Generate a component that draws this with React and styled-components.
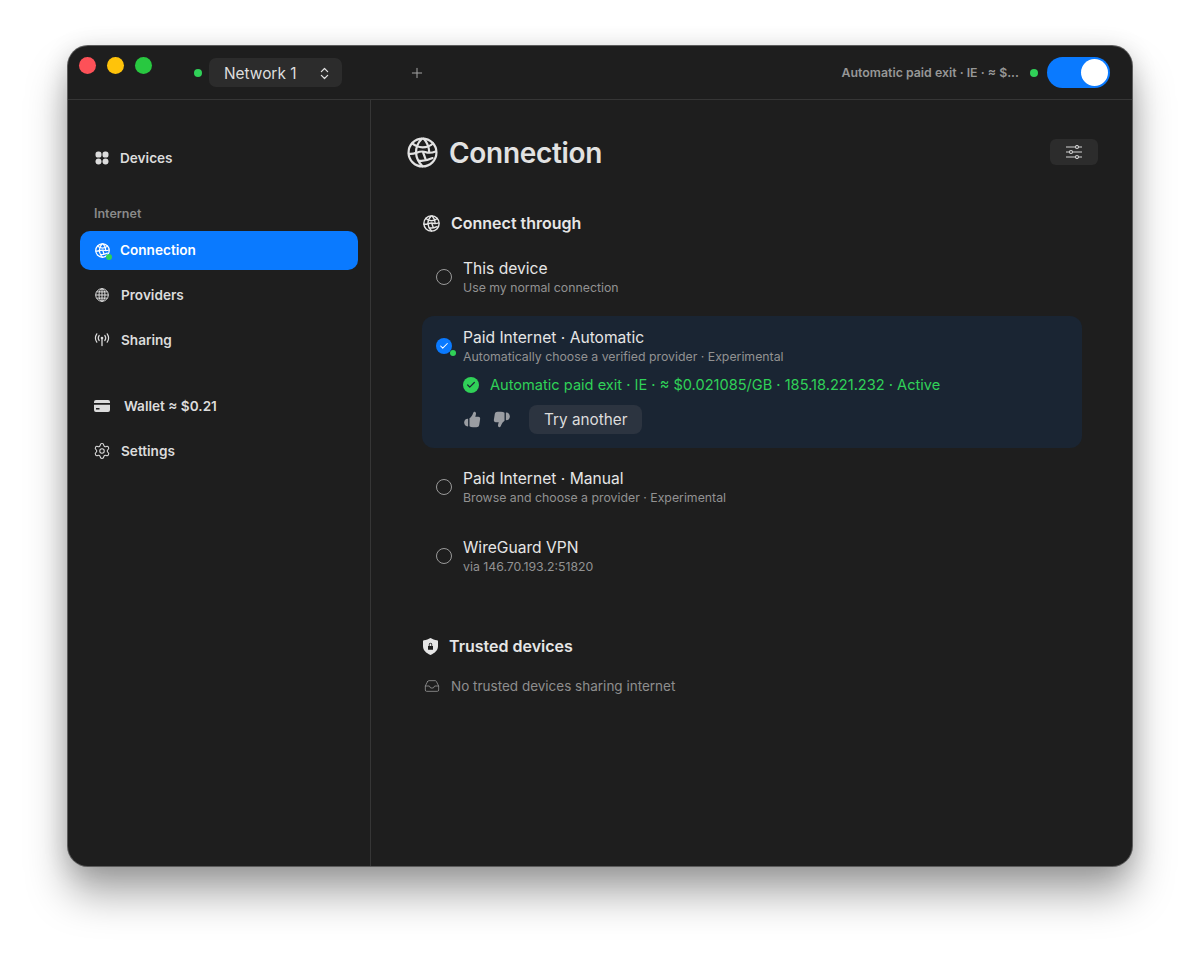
import React from "react";
import styled, { createGlobalStyle } from "styled-components";
import { ChevronsUpDown, Plus, Settings, Check, Inbox } from "lucide-react";

const GlobalStyle = createGlobalStyle`
    html, body {
        margin: 0;
        padding: 0;
        background: #fff;
        font-family: Inter, "Liberation Sans", sans-serif;
        -webkit-font-smoothing: antialiased;
    }
`;

const Page = styled.div`
    width: 1200px;
    height: 956px;
    box-sizing: border-box;
    padding: 46px 68px 90px;
    overflow: hidden;
`;

const Window = styled.div`
    height: 820px;
    display: flex;
    flex-direction: column;
    background: #1e1e1e;
    border-radius: 20px;
    box-shadow: 0 0 0 1px #5c5c5c, 0 28px 42px rgba(0, 0, 0, 0.34), 0 4px 26px rgba(0, 0, 0, 0.16);
    overflow: hidden;
`;

const TitleBar = styled.header`
    height: 53px;
    flex: none;
    display: flex;
    align-items: center;
    padding: 0 22px 0 11px;
    border-bottom: 1px solid #363636;
`;

const Lights = styled.div`
    display: flex;
    gap: 11px;
    margin: -15px 42px 0 0;
`;

const Light = styled.span`
    width: 17px;
    height: 17px;
    border-radius: 50%;
    background: ${(p) => p.$color};
`;

const Dot = styled.span`
    width: 8px;
    height: 8px;
    border-radius: 50%;
    background: #30d158;
    flex: none;
`;

const NetworkSelect = styled.div`
    width: 133px;
    height: 29px;
    box-sizing: border-box;
    margin-left: 7px;
    padding: 1px 10px 0 15px;
    display: flex;
    align-items: center;
    justify-content: space-between;
    background: #2c2c2c;
    border-radius: 7px;
    color: #dedede;
    font-size: 15.4px;
`;

const AddButton = styled.div`
    display: flex;
    margin-left: 67px;
    color: #a4a4a4;
`;

const StatusText = styled.span`
    margin-left: auto;
    color: #979797;
    font-size: 12.35px;
    font-weight: 600;
`;

const StatusDot = styled(Dot)`
    margin: 0 9px 0 11px;
`;

const Toggle = styled.div`
    width: 63px;
    height: 31px;
    box-sizing: border-box;
    padding: 2px;
    display: flex;
    justify-content: flex-end;
    background: #0a7aff;
    border-radius: 16px;
`;

const Knob = styled.span`
    width: 27px;
    height: 27px;
    border-radius: 50%;
    background: #fff;
`;

const Body = styled.div`
    flex: 1;
    display: flex;
    min-height: 0;
`;

const Sidebar = styled.nav`
    width: 303px;
    flex: none;
    box-sizing: border-box;
    padding: 39px 12px 0;
    border-right: 1px solid #363636;
`;

const NavItem = styled.div`
    position: relative;
    height: 39px;
    box-sizing: border-box;
    display: flex;
    align-items: center;
    gap: ${(p) => p.$gap || 11}px;
    padding: 0 0 1px 15px;
    margin-top: ${(p) => p.$top || 0}px;
    border-radius: 10px;
    background: ${(p) => (p.$active ? "#0a7aff" : "transparent")};
    color: ${(p) => (p.$active ? "#fff" : "#dcdcdc")};
    font-size: 13.6px;
    font-weight: 600;
`;

const NavIcon = styled.span`
    position: relative;
    width: 14px;
    height: 16px;
    display: flex;
    align-items: center;
    justify-content: center;

    svg {
        flex: none;
    }
`;

const NavBadge = styled(Dot)`
    position: absolute;
    right: -3px;
    bottom: -2px;
    width: 6px;
    height: 6px;
`;

const NavLabel = styled.div`
    margin: 28px 0 9px 14px;
    color: #8a8a8a;
    font-size: 12.5px;
    font-weight: 600;
    line-height: 16px;
`;

const Main = styled.main`
    flex: 1;
    box-sizing: border-box;
    padding: 37px 34px 0 36px;
    min-width: 0;
`;

const TitleRow = styled.div`
    display: flex;
    align-items: center;
    height: 31px;
    color: #e2e2e2;
`;

const Title = styled.h1`
    margin: 0 0 0 11px;
    font-size: 28px;
    font-weight: 600;
    letter-spacing: -0.3px;
`;

const FilterButton = styled.div`
    margin: -2px 0 0 auto;
    width: 48px;
    height: 26px;
    display: flex;
    align-items: center;
    justify-content: center;
    background: #2c2c2c;
    border-radius: 6px;
    color: #d4d4d4;
`;

const Section = styled.section`
    margin: ${(p) => p.$top}px 16px 0 15px;
`;

const SectionHead = styled.div`
    display: flex;
    align-items: center;
    gap: 11px;
    margin-left: 1px;
    color: #e6e6e6;
    font-size: 16px;
    font-weight: 600;
    line-height: 20px;
`;

const Options = styled.div`
    margin-top: 26px;
    display: flex;
    flex-direction: column;
`;

const Option = styled.div`
    padding: ${(p) => (p.$selected ? "12px 14px 14px" : "0 14px")};
    margin-bottom: ${(p) => p.$after || 0}px;
    background: ${(p) => (p.$selected ? "#1a2533" : "transparent")};
    border-radius: 12px;
`;

const OptionMain = styled.div`
    display: flex;
    align-items: center;
    gap: 11px;
`;

const RadioMark = styled.span`
    position: relative;
    width: 16px;
    height: 16px;
    flex: none;
    box-sizing: border-box;
    margin-top: -2px;
    display: flex;
    align-items: center;
    justify-content: center;
    border-radius: 50%;
    border: ${(p) => (p.$on ? "none" : "1.2px solid #9a9a9a")};
    background: ${(p) => (p.$on ? "#0a7aff" : "transparent")};
    color: #fff;
`;

const RadioBadge = styled(Dot)`
    position: absolute;
    right: -4px;
    bottom: -2px;
    width: 6px;
    height: 6px;
`;

const OptionTitle = styled.div`
    color: #e6e6e6;
    font-size: 15.6px;
    line-height: 20px;
`;

const OptionSub = styled.div`
    color: #929292;
    font-size: 12.3px;
    line-height: 17px;
`;

const ExitRow = styled.div`
    display: flex;
    align-items: center;
    gap: 11px;
    margin: 10px 0 0 27px;
    color: #30d158;
    font-size: 14.6px;
    line-height: 20px;
`;

const CheckBadge = styled.span`
    width: 16px;
    height: 16px;
    display: flex;
    align-items: center;
    justify-content: center;
    border-radius: 50%;
    background: #30d158;
    color: #1a2533;
`;

const Actions = styled.div`
    display: flex;
    align-items: center;
    margin: 10px 0 0 28px;
    color: #9a9da2;
`;

const ThumbGap = styled.span`
    display: flex;
    margin-right: ${(p) => p.$right}px;
`;

const TryButton = styled.div`
    height: 29px;
    padding: 0 15px;
    display: flex;
    align-items: center;
    background: #2c3440;
    border-radius: 8px;
    color: #dcdcdc;
    font-size: 15.3px;
`;

const EmptyRow = styled.div`
    display: flex;
    align-items: center;
    gap: 11px;
    margin: 20px 0 0 2px;
    color: #8e8e8e;
    font-size: 13.5px;
    line-height: 20px;
`;

function WorldIcon({ size, stroke = 1.8 }) {
    return (
        <svg width={size} height={size} viewBox="0 0 24 24" fill="none" stroke="currentColor" strokeWidth={stroke} strokeLinecap="round" strokeLinejoin="round">
            <circle cx="12" cy="12" r="10.8" />
            <path d="M11.5 1.3C8.300 4.500 6.800 8.200 7 12.300c.2 3.900 1.900 7.300 5 10.400" />
            <path d="M13 1.300c2.600 2.800 4 6.300 4.200 10.400" />
            <path d="M4 5c2.400 2 5 3 8 3s6-1 8.200-3" />
            <path d="M1.400 13c1.800.2 3.800 0 5.700-.7 2.400-.9 4.700-1.600 7-.7 2.600 1 4.600 1 8-.4" />
            <path d="M12.500 12l2 5.500M9 18.300c3.500.5 7-.2 10.800-2" />
        </svg>
    );
}

function GridGlobeIcon() {
    return (
        <svg width="14" height="14" viewBox="0 0 14 14" fill="none" stroke="currentColor" strokeWidth="1">
            <circle cx="7" cy="7" r="6.300" />
            <ellipse cx="7" cy="7" rx="3" ry="6.300" />
            <path d="M7 .7v12.600M.7 7h12.600M1.600 3.900h10.800M1.600 10.100h10.800" />
        </svg>
    );
}

function AntennaIcon() {
    return (
        <svg width="16" height="14" viewBox="0 0 16 14" fill="none" stroke="currentColor" strokeWidth="1.2" strokeLinecap="round">
            <circle cx="8" cy="5" r="1.300" fill="currentColor" stroke="none" />
            <path d="M8 5.500v7" strokeWidth="1.300" />
            <path d="M5.200 2.400a4.400 4.400 0 0 0 0 5.200M10.800 2.400a4.400 4.400 0 0 1 0 5.200" />
            <path d="M2.800 .8a7.600 7.600 0 0 0 0 8.400M13.200 .8a7.600 7.600 0 0 1 0 8.400" />
        </svg>
    );
}

function DevicesIcon() {
    return (
        <svg width="14" height="14" viewBox="0 0 14 14" fill="currentColor">
            <rect x="0.5" y="0.5" width="6" height="6" rx="2.6" />
            <rect x="7.5" y="0.5" width="6" height="6" rx="2.6" />
            <circle cx="3.5" cy="10.500" r="3" />
            <circle cx="10.500" cy="10.500" r="3" />
        </svg>
    );
}

function CardIcon() {
    return (
        <svg width="16" height="12" viewBox="0 0 16 12">
            <path fill="currentColor" fillRule="evenodd" d="M2 0h12a2 2 0 0 1 2 2v1H0V2a2 2 0 0 1 2-2zM0 4.800h16V10a2 2 0 0 1-2 2H2a2 2 0 0 1-2-2zM2 8v1.500h3.500V8z" />
        </svg>
    );
}

function SlidersIcon() {
    return (
        <svg width="16" height="14" viewBox="0 0 16 14" fill="none" stroke="currentColor" strokeWidth="1.1">
            <path d="M0 2h9.500M12.500 2H16M0 7h3.500M6.500 7H16M0 12h9.500M12.500 12H16" />
            <circle cx="11" cy="2" r="1.500" />
            <circle cx="5" cy="7" r="1.500" />
            <circle cx="11" cy="12" r="1.500" />
        </svg>
    );
}

function ThumbIcon({ down }) {
    return (
        <svg width="17" height="17" viewBox="0 0 18 17" fill="currentColor" style={down ? { transform: "rotate(180deg)" } : undefined}>
            <path d="M5.800 7.300c1.600-1.200 3-3 3.700-5.200C9.900.9 10.500.3 11.300.4c1 .1 1.500 1 1.400 2.100-.1 1-.4 2-.8 3.200h3.200c1.300 0 2.200 1 2 2.200l-1 6.400c-.3 1.500-1.400 2.400-3 2.400H9.500c-1.600 0-2.800-.3-3.700-1z" />
            <path d="M3.900 7.800c.2 0 .5.100.5.400v7.300c0 .3-.3.4-.5.400C1.600 15.900.2 14 .2 11.800s1.400-4 3.700-4z" />
        </svg>
    );
}

function ShieldIcon() {
    return (
        <svg width="15" height="17" viewBox="0 0 15 17">
            <path fill="currentColor" fillRule="evenodd" d="M7.500 0c2 1.200 4.200 1.900 6.500 2.200.6.100 1 .500 1 1.100v5c0 3.700-3 6.900-7.500 8.700C3 15.200 0 12 0 8.300v-5c0-.6.400-1 1-1.100C3.300 1.900 5.500 1.200 7.500 0zM5 8v3.800h5V8h-.8V6.500a1.700 1.700 0 0 0-3.400 0V8zm1.600 0V6.500a.9.900 0 0 1 1.800 0V8z" />
        </svg>
    );
}

export default function App() {
    return (
        <Page>
            <GlobalStyle />
            <Window>
                <TitleBar>
                    <Lights>
                        <Light $color="#fd5158" />
                        <Light $color="#ffc30a" />
                        <Light $color="#28c840" />
                    </Lights>
                    <Dot />
                    <NetworkSelect>
                        Network 1
                        <ChevronsUpDown size={15} strokeWidth={2} />
                    </NetworkSelect>
                    <AddButton>
                        <Plus size={16} strokeWidth={1.5} />
                    </AddButton>
                    <StatusText>Automatic paid exit · IE · ≈ $...</StatusText>
                    <StatusDot />
                    <Toggle>
                        <Knob />
                    </Toggle>
                </TitleBar>
                <Body>
                    <Sidebar>
                        <NavItem>
                            <NavIcon><DevicesIcon /></NavIcon>
                            Devices
                        </NavItem>
                        <NavLabel>Internet</NavLabel>
                        <NavItem $active>
                            <NavIcon>
                                <WorldIcon size={15} stroke={2} />
                                <NavBadge />
                            </NavIcon>
                            Connection
                        </NavItem>
                        <NavItem $top={6} $gap={12}>
                            <NavIcon><GridGlobeIcon /></NavIcon>
                            Providers
                        </NavItem>
                        <NavItem $top={6} $gap={12}>
                            <NavIcon><AntennaIcon /></NavIcon>
                            Sharing
                        </NavItem>
                        <NavItem $top={27} $gap={15}>
                            <NavIcon><CardIcon /></NavIcon>
                            Wallet ≈ $0.21
                        </NavItem>
                        <NavItem $top={6} $gap={12}>
                            <NavIcon><Settings size={18} strokeWidth={1.4} /></NavIcon>
                            Settings
                        </NavItem>
                    </Sidebar>
                    <Main>
                        <TitleRow>
                            <WorldIcon size={31} stroke={1.7} />
                            <Title>Connection</Title>
                            <FilterButton><SlidersIcon /></FilterButton>
                        </TitleRow>
                        <Section $top={45}>
                            <SectionHead>
                                <WorldIcon size={17} stroke={2} />
                                Connect through
                            </SectionHead>
                            <Options>
                                <Option $after={20}>
                                    <OptionMain>
                                        <RadioMark />
                                        <div>
                                            <OptionTitle>This device</OptionTitle>
                                            <OptionSub>Use my normal connection</OptionSub>
                                        </div>
                                    </OptionMain>
                                </Option>
                                <Option $selected $after={21}>
                                    <OptionMain>
                                        <RadioMark $on>
                                            <Check size={10} strokeWidth={2.5} />
                                            <RadioBadge />
                                        </RadioMark>
                                        <div>
                                            <OptionTitle>Paid Internet · Automatic</OptionTitle>
                                            <OptionSub>Automatically choose a verified provider · Experimental</OptionSub>
                                        </div>
                                    </OptionMain>
                                    <ExitRow>
                                        <CheckBadge><Check size={10} strokeWidth={3} /></CheckBadge>
                                        Automatic paid exit · IE · ≈ $0.021085/GB · 185.18.221.232 · Active
                                    </ExitRow>
                                    <Actions>
                                        <ThumbGap $right={12}><ThumbIcon /></ThumbGap>
                                        <ThumbGap $right={19}><ThumbIcon down /></ThumbGap>
                                        <TryButton>Try another</TryButton>
                                    </Actions>
                                </Option>
                                <Option $after={32}>
                                    <OptionMain>
                                        <RadioMark />
                                        <div>
                                            <OptionTitle>Paid Internet · Manual</OptionTitle>
                                            <OptionSub>Browse and choose a provider · Experimental</OptionSub>
                                        </div>
                                    </OptionMain>
                                </Option>
                                <Option>
                                    <OptionMain>
                                        <RadioMark />
                                        <div>
                                            <OptionTitle>WireGuard VPN</OptionTitle>
                                            <OptionSub>via 146.70.193.2:51820</OptionSub>
                                        </div>
                                    </OptionMain>
                                </Option>
                            </Options>
                        </Section>
                        <Section $top={61}>
                            <SectionHead>
                                <ShieldIcon />
                                Trusted devices
                            </SectionHead>
                            <EmptyRow>
                                <Inbox size={16} strokeWidth={1.3} />
                                No trusted devices sharing internet
                            </EmptyRow>
                        </Section>
                    </Main>
                </Body>
            </Window>
        </Page>
    );
}
